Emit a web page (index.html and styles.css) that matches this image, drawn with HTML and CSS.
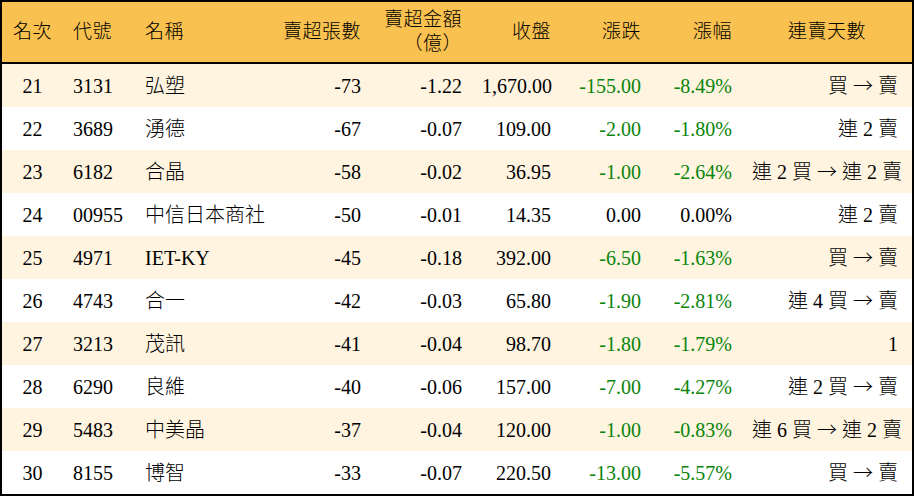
FILE: index.html
```html
<!DOCTYPE html>
<html lang="zh-Hant">
<head>
<meta charset="utf-8">
<title>賣超排行</title>
<link rel="stylesheet" href="styles.css">
</head>
<body>
<div class="frame">
<table class="rank">
<colgroup>
<col class="c1"><col class="c2"><col class="c3"><col class="c4"><col class="c5"><col class="c6"><col class="c7"><col class="c8"><col class="c9">
</colgroup>
<thead>
<tr class="head">
<th class="ctr">名次</th>
<th class="lft">代號</th>
<th class="lft">名稱</th>
<th class="rgt">賣超張數</th>
<th class="rgt two">賣超金額<br>（億）</th>
<th class="rgt">收盤</th>
<th class="rgt">漲跌</th>
<th class="rgt">漲幅</th>
<th class="ctr">連賣天數</th>
</tr>
</thead>
<tbody>
<tr class="odd"><td class="ctr">21</td><td class="lft">3131</td><td class="lft">弘塑</td><td class="rgt">-73</td><td class="rgt">-1.22</td><td class="rgt">1,670.00</td><td class="rgt down">-155.00</td><td class="rgt down">-8.49%</td><td class="rgt last">買 <span class="arr">→</span> 賣</td></tr>
<tr><td class="ctr">22</td><td class="lft">3689</td><td class="lft">湧德</td><td class="rgt">-67</td><td class="rgt">-0.07</td><td class="rgt">109.00</td><td class="rgt down">-2.00</td><td class="rgt down">-1.80%</td><td class="rgt last">連 2 賣</td></tr>
<tr class="odd"><td class="ctr">23</td><td class="lft">6182</td><td class="lft">合晶</td><td class="rgt">-58</td><td class="rgt">-0.02</td><td class="rgt">36.95</td><td class="rgt down">-1.00</td><td class="rgt down">-2.64%</td><td class="rgt last">連 2 買 <span class="arr">→</span> 連 2 賣</td></tr>
<tr><td class="ctr">24</td><td class="lft">00955</td><td class="lft">中信日本商社</td><td class="rgt">-50</td><td class="rgt">-0.01</td><td class="rgt">14.35</td><td class="rgt">0.00</td><td class="rgt">0.00%</td><td class="rgt last">連 2 賣</td></tr>
<tr class="odd"><td class="ctr">25</td><td class="lft">4971</td><td class="lft">IET-KY</td><td class="rgt">-45</td><td class="rgt">-0.18</td><td class="rgt">392.00</td><td class="rgt down">-6.50</td><td class="rgt down">-1.63%</td><td class="rgt last">買 <span class="arr">→</span> 賣</td></tr>
<tr><td class="ctr">26</td><td class="lft">4743</td><td class="lft">合一</td><td class="rgt">-42</td><td class="rgt">-0.03</td><td class="rgt">65.80</td><td class="rgt down">-1.90</td><td class="rgt down">-2.81%</td><td class="rgt last">連 4 買 <span class="arr">→</span> 賣</td></tr>
<tr class="odd"><td class="ctr">27</td><td class="lft">3213</td><td class="lft">茂訊</td><td class="rgt">-41</td><td class="rgt">-0.04</td><td class="rgt">98.70</td><td class="rgt down">-1.80</td><td class="rgt down">-1.79%</td><td class="rgt last">1</td></tr>
<tr><td class="ctr">28</td><td class="lft">6290</td><td class="lft">良維</td><td class="rgt">-40</td><td class="rgt">-0.06</td><td class="rgt">157.00</td><td class="rgt down">-7.00</td><td class="rgt down">-4.27%</td><td class="rgt last">連 2 買 <span class="arr">→</span> 賣</td></tr>
<tr class="odd"><td class="ctr">29</td><td class="lft">5483</td><td class="lft">中美晶</td><td class="rgt">-37</td><td class="rgt">-0.04</td><td class="rgt">120.00</td><td class="rgt down">-1.00</td><td class="rgt down">-0.83%</td><td class="rgt last">連 6 買 <span class="arr">→</span> 連 2 賣</td></tr>
<tr><td class="ctr">30</td><td class="lft">8155</td><td class="lft">博智</td><td class="rgt">-33</td><td class="rgt">-0.07</td><td class="rgt">220.50</td><td class="rgt down">-13.00</td><td class="rgt down">-5.57%</td><td class="rgt last">買 <span class="arr">→</span> 賣</td></tr>
</tbody>
</table>
</div>
</body>
</html>
```

FILE: styles.css
```css
html, body {
  margin: 0;
  padding: 0;
  background: #ffffff;
}

.frame {
  width: 910px;
  border: 2px solid #000000;
  background: #ffffff;
}

.rank {
  width: 910px;
  border-collapse: separate;
  border-spacing: 0;
  table-layout: fixed;
  font-family: "Liberation Serif", "Noto Sans CJK TC", serif;
  font-size: 20px;
  font-weight: 300;
  color: #000000;
}

.c1 { width: 61px; }
.c2 { width: 72px; }
.c3 { width: 136px; }
.c4 { width: 100px; }
.c5 { width: 101px; }
.c6 { width: 89px; }
.c7 { width: 90px; }
.c8 { width: 91px; }
.c9 { width: 170px; }

.rank th,
.rank td {
  padding: 0 10px;
  vertical-align: middle;
  white-space: nowrap;
  overflow: hidden;
}

.rank th {
  font-weight: 300;
  background: #f9c14f;
  border-bottom: 2px solid #000000;
  height: 60px;
  line-height: 24px;
  font-size: 19px;
  letter-spacing: 0.5px;
}

.rank td {
  height: 43px;
  line-height: 24px;
}

.odd td {
  background: #fef4e0;
}

.ctr { text-align: center; }
.lft { text-align: left; }
.rgt { text-align: right; }

.rank td.last {
  padding-right: 14px;
}

.arr {
  font-family: "Noto Sans CJK TC", sans-serif;
  font-weight: 300;
}

.down {
  color: #0a840a;
}
```
